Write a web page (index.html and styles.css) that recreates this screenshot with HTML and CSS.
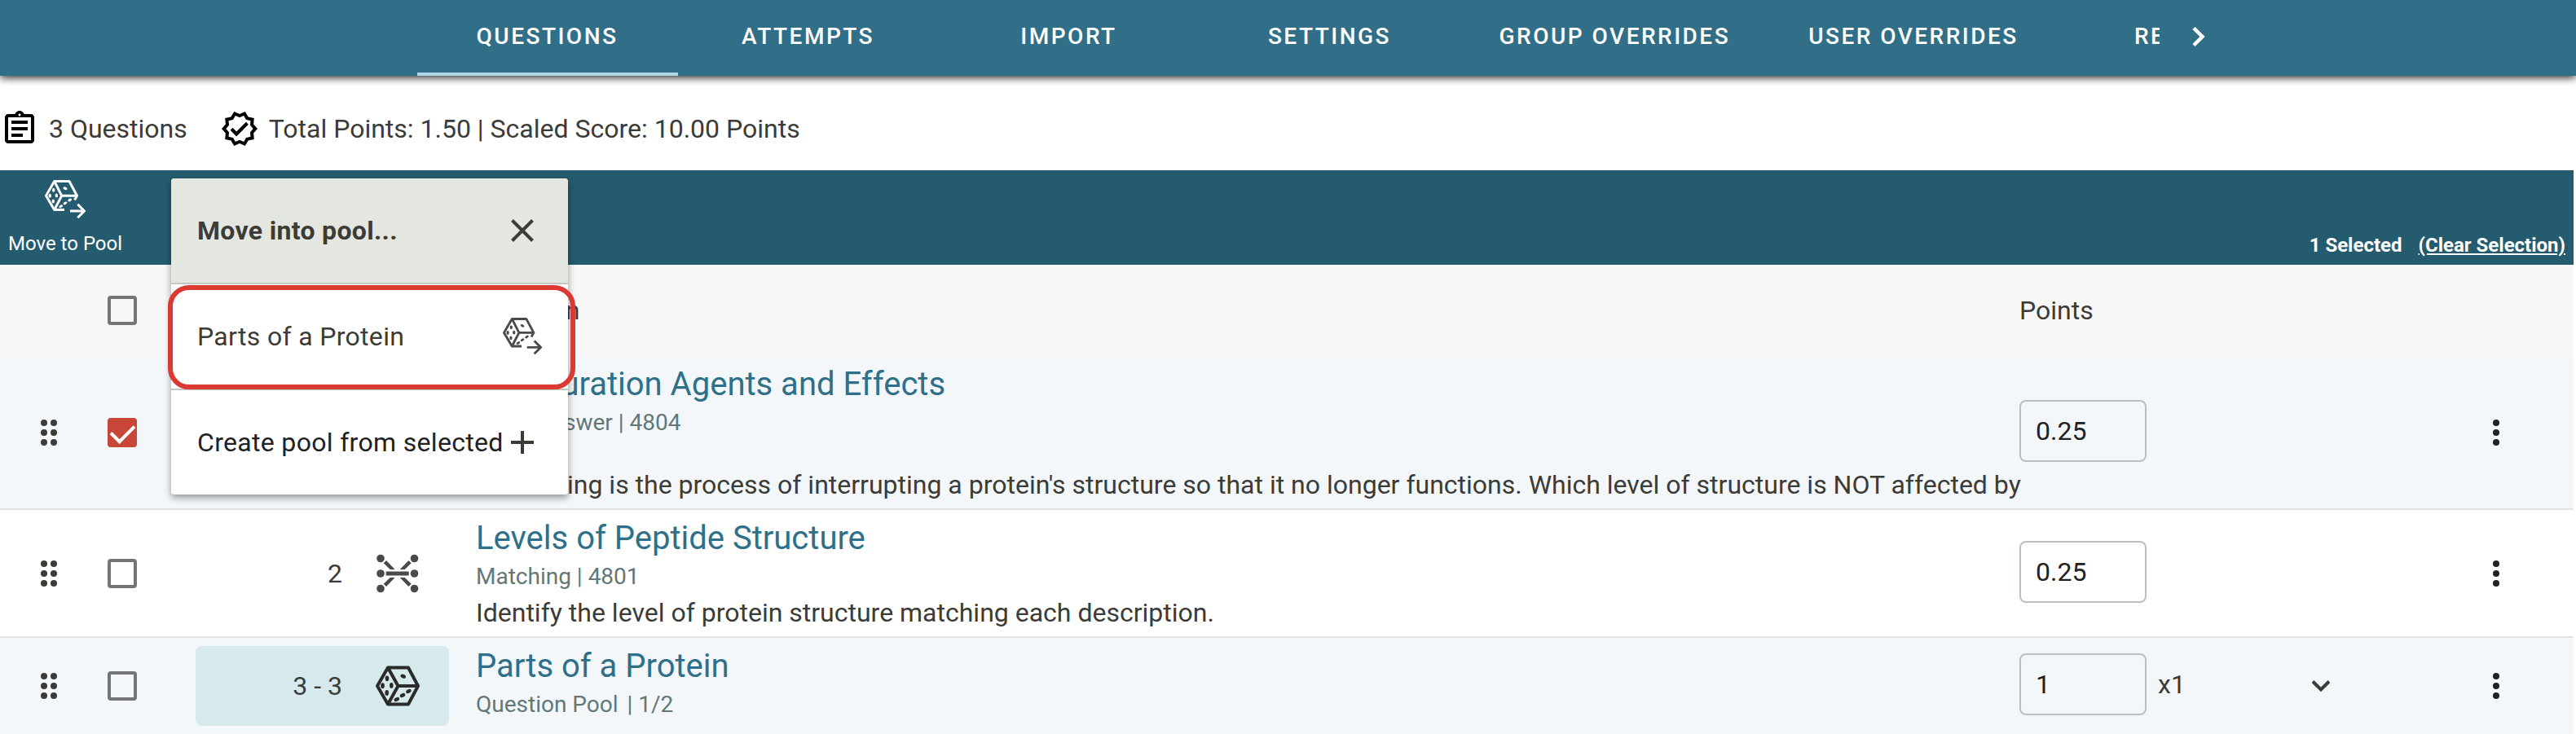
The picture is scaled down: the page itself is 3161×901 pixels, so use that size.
FILE: index.html
```
<!DOCTYPE html>
<html lang="en">
<head>
    <meta charset="UTF-8">
    <meta name="viewport" content="width=device-width, initial-scale=1.0">
    <title>Quiz Questions</title>
    <link rel="stylesheet" href="styles.css">
</head>
<body>
    <!-- shared icons -->
    <svg class="sprite" aria-hidden="true">
        <symbol id="icon-pool-move" viewBox="0 0 50 48">
            <g fill="none" stroke="currentColor" stroke-width="3" stroke-linejoin="round">
                <path d="M24 36.500H11.700L1.500 19.200 11.700 1.500H30L39.500 19.200 36.500 24.500"/>
                <path d="M11.700 1.500L20.700 19.200H39.500M20.700 19.200L11.700 36.500"/>
                <path d="M31 38H48.500M40.300 29.800L48.500 38 40.300 46.200" stroke-linejoin="miter"/>
            </g>
            <g fill="currentColor">
                <ellipse cx="25" cy="10.300" rx="2.600" ry="1.700" transform="rotate(25 25 10.300)"/>
                <ellipse cx="10.700" cy="12.300" rx="1.700" ry="2.500"/>
                <ellipse cx="6.300" cy="19.300" rx="1.700" ry="2.500"/>
                <ellipse cx="14.300" cy="19" rx="1.700" ry="2.500"/>
                <ellipse cx="10.300" cy="26" rx="1.700" ry="2.500"/>
                <ellipse cx="19.700" cy="32.300" rx="2.600" ry="1.600" transform="rotate(-30 19.700 32.300)"/>
                <ellipse cx="25" cy="28.400" rx="2.600" ry="1.600" transform="rotate(-30 25 28.400)"/>
                <ellipse cx="30.700" cy="24.500" rx="2.600" ry="1.600" transform="rotate(-30 30.700 24.500)"/>
            </g>
        </symbol>
        <symbol id="icon-drag" viewBox="0 0 24 36">
            <g fill="currentColor">
                <circle cx="6" cy="6" r="4"/><circle cx="18" cy="6" r="4"/>
                <circle cx="6" cy="18" r="4"/><circle cx="18" cy="18" r="4"/>
                <circle cx="6" cy="30" r="4"/><circle cx="18" cy="30" r="4"/>
            </g>
        </symbol>
        <symbol id="icon-more" viewBox="0 0 12 36">
            <g fill="currentColor">
                <circle cx="6" cy="6" r="4"/><circle cx="6" cy="18" r="4"/><circle cx="6" cy="30" r="4"/>
            </g>
        </symbol>
    </svg>

    <header class="topbar">
        <nav class="tabs">
            <div class="tabs-list">
                <a class="tab active" href="#questions">QUESTIONS</a>
                <a class="tab" href="#attempts">ATTEMPTS</a>
                <a class="tab" href="#import">IMPORT</a>
                <a class="tab" href="#settings">SETTINGS</a>
                <a class="tab" href="#group-overrides">GROUP OVERRIDES</a>
                <a class="tab" href="#user-overrides">USER OVERRIDES</a>
                <a class="tab" href="#results">RESULTS</a>
            </div>
            <button class="tabs-next" type="button" aria-label="Next tabs">
                <svg width="16" height="26" viewBox="0 0 16 26"><path d="M2 2.500L12.500 13 2 23.500" fill="none" stroke="currentColor" stroke-width="4.500"/></svg>
            </button>
        </nav>
    </header>

    <section class="summary">
        <div class="summary-item">
            <svg width="48" height="48" viewBox="0 0 24 24"><path d="M7 15h7v2H7zm0-4h10v2H7zm0-4h10v2H7zm12-4h-4.180C14.400 1.840 13.300 1 12 1c-1.300 0-2.400.84-2.820 2H5c-1.100 0-2 .9-2 2v14c0 1.100.9 2 2 2h14c1.100 0 2-.9 2-2V5c0-1.100-.9-2-2-2zm-7-.25c.41 0 .75.34.75.75s-.34.75-.75.75-.75-.34-.75-.75.34-.75.75-.75zM19 19H5V5h14v14z"/></svg>
            <span>3 Questions</span>
        </div>
        <div class="summary-item">
            <svg width="48" height="48" viewBox="0 0 24 24"><path fill-rule="evenodd" d="M23 11.990l-2.440-2.790.34-3.690-3.610-.82L15.400 1.500 12 2.960 8.600 1.500 6.710 4.690 3.100 5.500l.34 3.700L1 11.990l2.440 2.790-.34 3.700 3.610.82 1.890 3.200 3.400-1.470 3.400 1.460 1.890-3.190 3.610-.82-.34-3.690L23 11.990zm-3.950 1.480l-.56.65.08.85.18 1.950-1.900.43-.84.19-.44.74-.99 1.680-1.780-.77-.8-.34-.79.34-1.780.77-.99-1.670-.44-.74-.84-.19-1.900-.43.18-1.960.08-.85-.56-.65-1.290-1.470 1.290-1.480.56-.65-.09-.86-.18-1.940 1.900-.43.84-.19.44-.74.99-1.680 1.780.77.8.34.79-.34 1.780-.77.99 1.680.44.74.84.19 1.900.43-.18 1.950-.08.85.56.65 1.290 1.470-1.290 1.480z"/><path d="M10.090 16.720l-3.800-3.810 1.480-1.480 2.320 2.330 5.850-5.870 1.480 1.480z"/></svg>
            <span>Total Points: 1.50 | Scaled Score: 10.00 Points</span>
        </div>
    </section>

    <main class="content">
        <div class="toolbar">
            <button class="tool" type="button">
                <svg width="50" height="48"><use href="#icon-pool-move"/></svg>
                <span>Move to Pool</span>
            </button>
            <div class="selection">
                <span>1 Selected</span>
                <a href="#clear">(Clear Selection)</a>
            </div>

            <div class="menu">
                <div class="menu-row menu-head">
                    <span>Move into pool...</span>
                    <button class="menu-close" type="button" aria-label="Close">
                        <svg width="28" height="28" viewBox="0 0 28 28"><path d="M1.500 1.500l25 25M26.500 1.500l-25 25" stroke="currentColor" stroke-width="4"/></svg>
                    </button>
                </div>
                <button class="menu-row menu-pool" type="button">
                    <span>Parts of a Protein</span>
                    <svg width="48" height="46"><use href="#icon-pool-move"/></svg>
                </button>
                <button class="menu-row menu-create" type="button">
                    <span>Create pool from selected</span>
                    <svg width="28" height="28" viewBox="0 0 28 28"><path d="M14 0v28M0 14h28" stroke="currentColor" stroke-width="4"/></svg>
                </button>
            </div>
        </div>

        <table class="questions">
            <colgroup>
                <col class="col-drag">
                <col class="col-check">
                <col class="col-number">
                <col class="col-question">
                <col class="col-points">
                <col class="col-expand">
                <col class="col-more">
            </colgroup>
            <thead>
                <tr>
                    <th></th>
                    <th><input class="check" type="checkbox" aria-label="Select all questions"></th>
                    <th></th>
                    <th class="left">Question</th>
                    <th class="left">Points</th>
                    <th></th>
                    <th></th>
                </tr>
            </thead>
            <tbody>
                <tr class="shaded">
                    <td><button class="icon-button" type="button" aria-label="Reorder"><svg width="24" height="36"><use href="#icon-drag"/></svg></button></td>
                    <td><input class="check" type="checkbox" aria-label="Select question 1" checked></td>
                    <td><div class="number"><span>1</span></div></td>
                    <td class="question">
                        <a class="title" href="#q4804">Denaturation Agents and Effects</a>
                        <div class="type">Short Answer | 4804</div>
                        <p class="text">Denaturing is the process of interrupting a protein's structure so that it no longer functions. Which level of structure is NOT affected by</p>
                    </td>
                    <td class="points"><div class="points-box"><input class="points-input" type="text" value="0.25" aria-label="Points for question 1"></div></td>
                    <td></td>
                    <td class="more"><button class="icon-button" type="button" aria-label="More options"><svg width="12" height="36"><use href="#icon-more"/></svg></button></td>
                </tr>
                <tr>
                    <td><button class="icon-button" type="button" aria-label="Reorder"><svg width="24" height="36"><use href="#icon-drag"/></svg></button></td>
                    <td><input class="check" type="checkbox" aria-label="Select question 2"></td>
                    <td>
                        <div class="number">
                            <span>2</span>
                            <svg class="matching-icon" width="56" height="56" viewBox="0 0 56 56" fill="currentColor">
                                <circle cx="7" cy="9.500" r="4.800"/><circle cx="48.500" cy="9.500" r="4.800"/>
                                <circle cx="7" cy="28" r="4.800"/><circle cx="48.500" cy="28" r="4.800"/>
                                <circle cx="7" cy="46.500" r="4.800"/><circle cx="48.500" cy="46.500" r="4.800"/>
                                <path d="M13.700 25.500h28v5h-28zM10.700 15.300L14 12 24.700 23h-6zM44.700 15.300L41.400 12 30.700 23h6zM10.700 40.700L14 44 24.700 33h-6zM44.700 40.700L41.400 44 30.700 33h6z"/>
                            </svg>
                        </div>
                    </td>
                    <td class="question">
                        <a class="title" href="#q4801">Levels of Peptide Structure</a>
                        <div class="type">Matching | 4801</div>
                        <div class="text">Identify the level of protein structure matching each description.</div>
                    </td>
                    <td class="points"><div class="points-box"><input class="points-input" type="text" value="0.25" aria-label="Points for question 2"></div></td>
                    <td></td>
                    <td class="more"><button class="icon-button" type="button" aria-label="More options"><svg width="12" height="36"><use href="#icon-more"/></svg></button></td>
                </tr>
                <tr class="shaded">
                    <td><button class="icon-button" type="button" aria-label="Reorder"><svg width="24" height="36"><use href="#icon-drag"/></svg></button></td>
                    <td><input class="check" type="checkbox" aria-label="Select question pool"></td>
                    <td>
                        <div class="number pool">
                            <span>3 - 3</span>
                            <svg class="dice-icon" width="56" height="56" viewBox="0 0 56 56">
                                <g fill="none" stroke="currentColor" stroke-width="4" stroke-linejoin="round">
                                    <path d="M3 28L16 5.500H41L53 28 41 50.500H16z"/>
                                    <path d="M16 5.500L28.500 28H53M28.500 28L16 50.500"/>
                                </g>
                                <g fill="currentColor">
                                    <ellipse cx="34.700" cy="16.200" rx="3.400" ry="2.300" transform="rotate(25 34.700 16.200)"/>
                                    <ellipse cx="15" cy="18.800" rx="2.300" ry="3.400"/>
                                    <ellipse cx="9.500" cy="27.700" rx="2.300" ry="3.400"/>
                                    <ellipse cx="20.300" cy="27.400" rx="2.300" ry="3.400"/>
                                    <ellipse cx="14.700" cy="36.500" rx="2.300" ry="3.400"/>
                                    <ellipse cx="26.800" cy="44.500" rx="3.400" ry="2.300" transform="rotate(-25 26.800 44.500)"/>
                                    <ellipse cx="34" cy="39.500" rx="3.400" ry="2.300" transform="rotate(-25 34 39.500)"/>
                                    <ellipse cx="41.400" cy="34.500" rx="3.400" ry="2.300" transform="rotate(-25 41.400 34.500)"/>
                                </g>
                            </svg>
                        </div>
                    </td>
                    <td class="question">
                        <a class="title" href="#pool">Parts of a Protein</a>
                        <div class="type">Question Pool <span class="pool-count">| 1/2</span></div>
                    </td>
                    <td class="points"><div class="points-box"><input class="points-input" type="text" value="1" aria-label="Points per question in pool"><span>x1</span></div></td>
                    <td><button class="icon-button" type="button" aria-label="Expand pool"><svg width="24" height="16" viewBox="0 0 24 16"><path d="M2 2.500l10 10 10-10" fill="none" stroke="currentColor" stroke-width="4"/></svg></button></td>
                    <td class="more"><button class="icon-button" type="button" aria-label="More options"><svg width="12" height="36"><use href="#icon-more"/></svg></button></td>
                </tr>
            </tbody>
        </table>
    </main>
</body>
</html>
```

FILE: styles.css
```
* {
    box-sizing: border-box;
}

body {
    margin: 0;
    font-family: Roboto, Arial, sans-serif;
    font-size: 32px;
    line-height: 44px;
    color: #3b3b38;
    background-color: #fff;
}

button {
    padding: 0;
    border: none;
    background: none;
    font: inherit;
    color: inherit;
    cursor: pointer;
}

svg {
    display: block;
    flex: none;
}

.sprite {
    position: absolute;
    width: 0;
    height: 0;
}

/* Tabs */
.topbar {
    background-color: #316f88;
    box-shadow: 0 2px 10px rgba(0, 0, 0, 0.9);
}

.tabs {
    display: flex;
    max-width: 2330px;
    margin: 0 auto;
    padding-left: 96px;
    color: #fff;
}

.tabs-list {
    display: flex;
    flex: 1;
    min-width: 0;
    overflow: hidden;
}

.tab {
    flex: none;
    min-width: 320px;
    padding: 23px 48px 22px;
    border-bottom: 4px solid transparent;
    font-size: 28px;
    font-weight: 500;
    letter-spacing: 0.089em;
    text-align: center;
    text-decoration: none;
    color: #fff;
}

.tab.active {
    border-bottom-color: #b0d8e8;
}

.tabs-next {
    display: flex;
    align-items: center;
    justify-content: center;
    width: 96px;
    padding-bottom: 4px;
}

/* Summary */
.summary {
    display: flex;
    gap: 40px;
    padding: 41px 0 27px;
}

.summary-item {
    display: flex;
    align-items: center;
    gap: 12px;
}

.summary-item svg {
    fill: #000;
}

/* Toolbar */
.content {
    margin-right: 3px;
}

.toolbar {
    position: relative;
    display: flex;
    justify-content: space-between;
    height: 116px;
    padding: 12px 10px 8px;
    background-color: #245b6f;
    color: #fff;
    font-size: 24px;
    line-height: 32px;
}

.tool {
    display: flex;
    flex-direction: column;
    align-items: center;
    gap: 14px;
}

.selection {
    display: flex;
    align-items: flex-end;
    gap: 20px;
    font-weight: 700;
}

.selection a {
    color: #fff;
}

/* Pool menu */
.menu {
    position: absolute;
    z-index: 2;
    top: 10px;
    left: 210px;
    width: 487px;
    border-radius: 4px;
    background-color: #fff;
    box-shadow: 0 4px 8px rgba(0, 0, 0, 0.4);
    color: #3b3b38;
    font-size: 32px;
    line-height: 44px;
    letter-spacing: 0.01em;
}

.menu-row {
    display: flex;
    align-items: center;
    justify-content: space-between;
    width: 100%;
    height: 130px;
    padding: 0 32px;
    border-bottom: 2px solid #c4c6c4;
    letter-spacing: inherit;
    text-align: left;
    white-space: nowrap;
}

.menu-head {
    padding-right: 42px;
    border-radius: 4px 4px 0 0;
    background-color: #e4e7e0;
    font-weight: 700;
}

.menu-pool {
    position: relative;
}

.menu-pool svg {
    color: #4a4a4a;
}

.menu-pool::after {
    content: "";
    position: absolute;
    top: 1px;
    right: -9px;
    bottom: -1px;
    left: -4px;
    border: 6px solid #db3a33;
    border-radius: 26px;
}

.menu-create {
    height: 128px;
    padding-right: 42px;
    border-bottom: none;
}

.menu-create span {
    color: #212121;
}

/* Questions table */
.questions {
    width: 100%;
    table-layout: fixed;
    border-collapse: collapse;
}

.col-drag {
    width: 120px;
}

.col-check {
    width: 60px;
}

.col-number {
    width: 404px;
}

.col-points {
    width: 300px;
}

.col-expand {
    width: 140px;
}

.col-more {
    width: 240px;
}

.questions th {
    height: 112px;
    padding: 0;
    background-color: #f7f7f7;
    font-weight: 400;
}

.questions .left {
    text-align: left;
}

.questions td {
    padding: 0;
    text-align: center;
}

.questions tbody tr {
    border-bottom: 2px solid #e0e3e5;
}

.questions tbody tr:last-child {
    border-bottom: none;
}

.shaded {
    background-color: #f3f7fa;
}

.check {
    appearance: none;
    display: grid;
    justify-content: center;
    width: 36px;
    height: 36px;
    margin: 0 auto;
    border: 4px solid #757575;
    border-radius: 4px;
}

.check:checked {
    border-color: #c74638;
    background-color: #c74638;
}

.check:checked::before {
    content: "";
    width: 13px;
    height: 24px;
    margin-top: -2px;
    border: solid #fff;
    border-width: 0 4px 4px 0;
    transform: rotate(45deg);
}

.icon-button {
    display: block;
    margin: 0 auto;
}

.questions .more {
    padding-left: 50px;
    color: #212121;
}

.number {
    display: flex;
    align-items: center;
    justify-content: flex-end;
    gap: 40px;
    margin: 10px 33px 10px 60px;
    padding-right: 35px;
}

.pool {
    height: 98px;
    border-radius: 8px;
    background-color: #d6e9ec;
}

.matching-icon {
    color: #4a4a4a;
}

.dice-icon {
    color: #2b2b2b;
}

.questions .question {
    padding: 9px 0 7px;
    text-align: left;
    vertical-align: top;
}

.title {
    display: block;
    font-size: 40px;
    line-height: 51px;
    text-decoration: none;
    color: #2e7089;
}

.type {
    font-size: 28px;
    color: #637876;
}

.pool-count {
    margin-left: 4px;
}

.text {
    margin: 0;
    white-space: nowrap;
}

p.text {
    margin-top: 32px;
}

.questions .points {
    padding-bottom: 4px;
}

.points-box {
    display: flex;
    align-items: center;
    gap: 14px;
}

.points-input {
    width: 156px;
    height: 76px;
    padding: 0 18px;
    border: 2px solid #bbbfc0;
    border-radius: 8px;
    background: none;
    font: inherit;
    color: #212121;
}
```
